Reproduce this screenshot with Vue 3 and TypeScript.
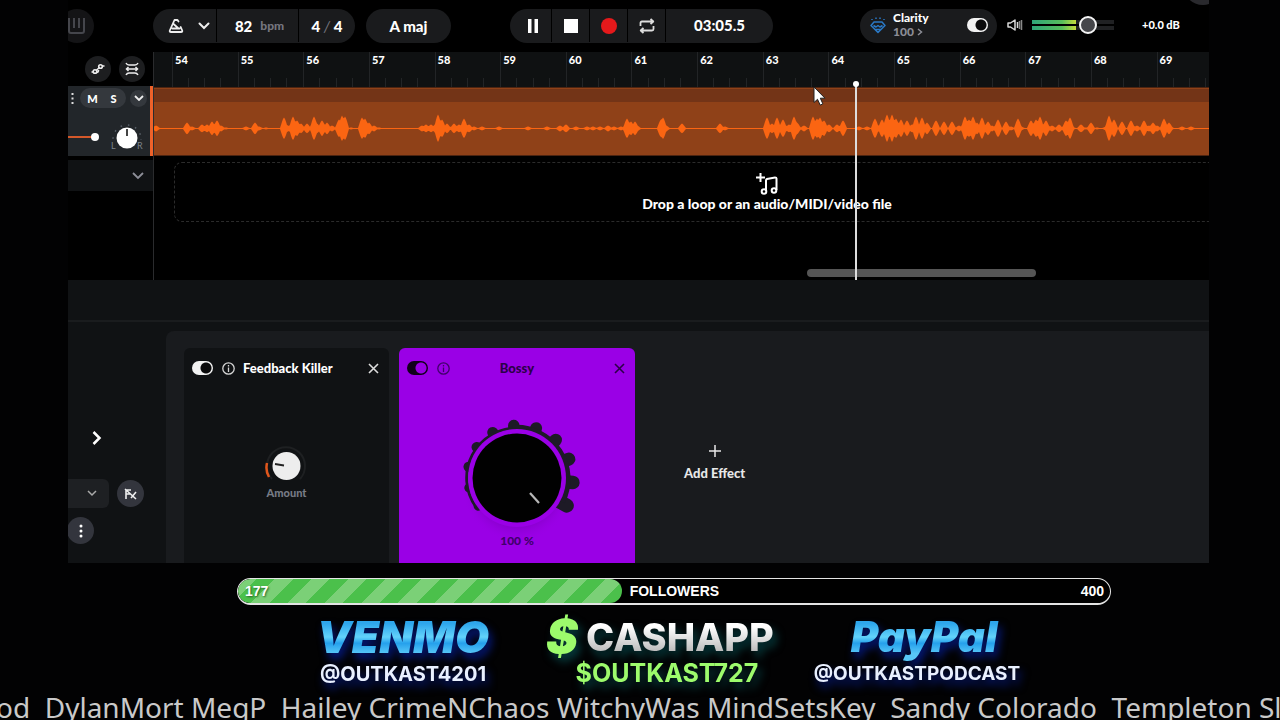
<script setup lang="ts">
import { ref } from 'vue'

const bars: number[] = Array.from({ length: 16 }, (_, i) => 54 + i)

const clarityOn = ref(true)
const feedbackOn = ref(true)
const bossyOn = ref(true)
const masterVolume = ref(73)
const trackVolume = ref(100)

const followers = 177
const followerGoal = 400
const followerWidth = `${Math.round((followers / followerGoal) * 100)}%`

// Waveform peaks as [position, amplitude] on a 1056-unit wide clip.
const peaks: [number, number][] = [
  [3, 3], [34, 6], [39, 2], [49, 4], [54, 4], [59, 7], [64, 8], [68, 3], [73, 1], [93, 2], [102, 6], [106, 2], [113, 1],
  [131, 11], [135, 3], [140, 12], [144, 8], [148, 5], [154, 5], [161, 12], [164, 5], [169, 8], [174, 6], [179, 3],
  [186, 9], [189, 13], [192, 12], [198, 1], [209, 11], [212, 10], [216, 6], [221, 3], [226, 1],
  [269, 3], [273, 4], [278, 4], [281, 3], [285, 14], [289, 9], [294, 5], [301, 5], [306, 4], [311, 10], [316, 4], [321, 2],
  [329, 2], [346, 2], [375, 2], [394, 2], [407, 3], [413, 4], [423, 2], [434, 2], [440, 2], [447, 2], [455, 3],
  [461, 2], [468, 2], [474, 10], [478, 7], [482, 7], [484, 3], [508, 9], [510, 11], [513, 3], [529, 5], [567, 5], [572, 2],
  [614, 11], [619, 5], [624, 11], [630, 9], [636, 4], [641, 12], [644, 6], [651, 3], [660, 12], [664, 10], [667, 11],
  [671, 8], [676, 4], [684, 4], [690, 8], [706, 2], [714, 2], [722, 10], [729, 9], [734, 14], [739, 14], [743, 10],
  [748, 9], [754, 8], [759, 4], [763, 12], [769, 11], [774, 6], [783, 8], [791, 7], [799, 7], [806, 3], [812, 12],
  [816, 9], [820, 12], [824, 6], [829, 11], [835, 7], [839, 3], [845, 9], [853, 7], [858, 2], [865, 10], [868, 2],
  [878, 8], [883, 9], [887, 12], [893, 8], [899, 3], [906, 4], [913, 8], [917, 11], [919, 2], [928, 4], [933, 1],
  [938, 6], [944, 1], [953, 2], [956, 13], [961, 9], [969, 7], [978, 8], [984, 3], [991, 8], [996, 3], [1000, 6],
  [1004, 3], [1011, 10], [1016, 6], [1019, 1], [1029, 2], [1038, 2],
]

function amplitude(x: number): number {
  let level = 0.6
  for (const [centre, height] of peaks) {
    const distance = Math.abs(x - centre)
    if (distance < 4) level = Math.max(level, height * (1 - (distance / 4) ** 1.4))
  }
  return level
}

const wavePath = (() => {
  const top: string[] = []
  const bottom: string[] = []
  for (let x = 0; x <= 1056; x++) {
    const a = amplitude(x)
    top.push(`${x} ${(26.5 - a).toFixed(1)}`)
    bottom.unshift(`${x} ${(26.5 + a * 0.96).toFixed(1)}`)
  }
  return `M${top.join('L')}L${bottom.join('L')}Z`
})()

// Teeth of the Bossy knob grow clockwise from lower left to lower right.
const teeth = Array.from({ length: 11 }, (_, i) => {
  const angle = ((144 + i * 24.5) * Math.PI) / 180
  const r = 48 + i * 0.9
  return { x: 70 + r * Math.cos(angle), y: 64 + r * Math.sin(angle), w: 9 + i * 0.5 }
})

const tickerText =
  'od  DylanMort MegP  Hailey CrimeNChaos WitchyWas MindSetsKey  Sandy Colorado  Templeton Sle'
</script>

<template>
  <div class="page">
    <main class="daw">
      <header class="toolbar">
        <button class="piano" aria-label="Instrument">
          <svg width="18" height="18" viewBox="0 0 18 18" fill="none" stroke="#45464c" stroke-width="2">
            <path d="M1 1v13q0 2 2 2h11q2 0 2-2V1M6 1v10M11 1v10" />
          </svg>
        </button>
        <div class="pill tempo">
          <div class="seg metro">
            <button aria-label="Metronome">
              <svg width="16" height="16" viewBox="0 0 16 16" fill="none" stroke="#eee" stroke-width="1.8" stroke-linecap="round" stroke-linejoin="round">
                <path d="M10.500 3.500 9.500 2h-3L1.800 12.500Q1.300 14 3 14h10q1.700 0 1.200-1.500L12.700 9M4.500 10.500h7M5 5.500l5 4.500" />
              </svg>
            </button>
            <button aria-label="Metronome options">
              <svg width="12" height="8" viewBox="0 0 12 8" fill="none" stroke="#eee" stroke-width="2" stroke-linecap="round"><path d="m1.500 1.500 4.500 4.500 4.500-4.500" /></svg>
            </button>
          </div>
          <button class="seg bpm"><b>82</b><span>bpm</span></button>
          <button class="seg meter">4 <i>/</i> 4</button>
        </div>
        <button class="pill key">A maj</button>
        <div class="pill transport">
          <button class="seg first" aria-label="Pause"><svg width="12" height="14" viewBox="0 0 12 14" fill="#fff"><path d="M1 0h3.500v14H1zM7.500 0H11v14H7.500z" /></svg></button>
          <button class="seg" aria-label="Stop"><svg width="14" height="14" viewBox="0 0 14 14" fill="#fff"><path d="M0 0h14v14H0z" /></svg></button>
          <button class="seg" aria-label="Record"><svg width="16" height="16" viewBox="0 0 16 16" fill="#e5191b"><circle cx="8" cy="8" r="8" /></svg></button>
          <button class="seg" aria-label="Loop">
            <svg width="16" height="16" viewBox="0 0 16 16" fill="none" stroke="#ddd" stroke-width="1.800" stroke-linejoin="round"><path d="M1.500 8V5q0-1.500 1.500-1.500h10M11.500 1l2.800 2.500-2.800 2.500M14.500 8v3q0 1.500-1.500 1.500H3M4.500 10l-2.800 2.500L4.500 15" /></svg>
          </button>
          <span class="seg time">03:05.5</span>
        </div>
        <div class="pill clarity">
          <svg width="16" height="18" viewBox="0 0 16 18" fill="none" stroke="#2a78c4" stroke-width="1.500" stroke-linejoin="round">
            <path d="M4 6h8l3 3.500-7 7L1 9.500zM3.500 9.500 6 11l2-1.500 2 1.500 2.500-1.500M5.500 13.500h5M2 4V3M6 3V1.500M10 3V1.500M14 4V3" />
          </svg>
          <label class="clarity-text" for="clarity"><b>Clarity</b><span>100 <svg width="6" height="8" viewBox="0 0 6 8" fill="none" stroke="#8c8d96" stroke-width="1.500"><path d="m1 1 3.500 3L1 7" /></svg></span></label>
          <input id="clarity" v-model="clarityOn" class="toggle" type="checkbox" />
        </div>
        <div class="volume">
          <svg width="16" height="14" viewBox="0 0 16 14" fill="none" stroke="#d8d8d8" stroke-width="1.500" stroke-linejoin="round"><path d="M1 5v4h2.500L8 12V2L3.500 5zM10.500 4v6" /><path d="M12.500 3v8M14.500 2v10" stroke="#888" /></svg>
          <div class="meters">
            <i></i><i></i>
            <input v-model="masterVolume" type="range" min="0" max="100" aria-label="Master volume" />
          </div>
          <output>+0.0 dB</output>
        </div>
        <span class="avatar"></span>
      </header>

      <section class="arranger">
        <div class="heads">
          <div class="tools">
            <button class="round" aria-label="Automation">
              <svg width="14" height="14" viewBox="0 0 14 14" fill="none" stroke="#eee" stroke-width="1.600"><circle cx="4" cy="9.500" r="1.800" /><circle cx="9.500" cy="4.500" r="1.800" /><path d="m5 8.500 3.500-3M.500 10h1.500M11 4h2.500M5.500 10.500q2 0 2-2.500" /></svg>
            </button>
            <button class="round" aria-label="Auto spacing">
              <svg width="14" height="14" viewBox="0 0 14 14" fill="none" stroke="#eee" stroke-width="1.500"><path d="M1 1q1 2 3 2h6q2 0 3-2M1 13q1-2 3-2h6q2 0 3 2M1 7h12M3.500 5l-2 2 2 2M10.500 5l2 2-2 2" /></svg>
            </button>
          </div>
          <div class="track">
            <div class="track-row">
              <button class="plain" aria-label="Track menu"><svg width="3" height="11" viewBox="0 0 3 11" fill="#ddd"><path d="M.500 0h2v2h-2zM.500 4.500h2v2h-2zM.500 9h2v2h-2z" /></svg></button>
              <div class="ms"><button>M</button><button>S</button></div>
              <button class="more" aria-label="Expand track"><svg width="10" height="6" viewBox="0 0 10 6" fill="none" stroke="#eee" stroke-width="1.800"><path d="m1 1 4 4 4-4" /></svg></button>
            </div>
            <div class="track-row">
              <input v-model="trackVolume" class="fader" type="range" min="0" max="100" aria-label="Track volume" />
              <svg class="pan" width="34" height="30" viewBox="0 0 34 30">
                <circle cx="17" cy="17" r="14" fill="none" stroke="#596069" stroke-width="1.500" stroke-dasharray="1.500 6" stroke-dashoffset="1" />
                <path d="M0 20h34v10H0z" fill="#22262a" />
                <circle cx="17" cy="16" r="10.500" fill="#fff" /><path d="M17 7v7" stroke="#444" stroke-width="2" />
                <text x="1" y="27">L</text><text x="27" y="27">R</text>
              </svg>
            </div>
          </div>
          <div class="master">
            <button class="plain" aria-label="Expand master"><svg width="12" height="8" viewBox="0 0 12 8" fill="none" stroke="#8d8e98" stroke-width="1.800"><path d="m1 1 5 5 5-5" /></svg></button>
          </div>
        </div>

        <div class="timeline">
          <div class="ruler">
            <div v-for="bar in bars" :key="bar" class="bar"><span>{{ bar }}</span><i></i><i></i><i></i><i></i></div>
          </div>
          <div class="clip">
            <div class="clip-title"></div>
            <svg class="wave" viewBox="0 0 1056 52" preserveAspectRatio="none" fill="#fb6512"><path :d="wavePath" /></svg>
          </div>
          <div class="drop">
            <svg width="22" height="22" viewBox="0 0 22 22" fill="none" stroke="#fff" stroke-width="2"><path d="M4.500 0v9M0 4.500h9M10 18V7.500q0-1 1-1.500l8-1.500q1.500 0 1.500 1V17" /><circle cx="8" cy="18.500" r="2.300" /><circle cx="18" cy="17.500" r="2.300" /></svg>
            <p>Drop a loop or an audio/MIDI/video file</p>
          </div>
          <div class="scroll"></div>
          <div class="playhead"></div>
          <svg class="cursor" width="14" height="20" viewBox="0 0 14 20" fill="#fff" stroke="#222" stroke-width="1"><path d="M1 1v15.500l3.500-3.200 2.700 5.800 2.700-1.200-2.600-5.700H12z" /></svg>
        </div>
      </section>

      <section class="effects">
        <div class="effects-bar"></div>
        <div class="effects-body">
          <aside>
            <button class="plain next" aria-label="Next"><svg width="10" height="16" viewBox="0 0 10 16" fill="none" stroke="#fff" stroke-width="2.500"><path d="m1.500 2 6 6-6 6" /></svg></button>
            <div class="preset-row">
              <button class="preset" aria-label="Presets"><svg width="10" height="7" viewBox="0 0 10 7" fill="none" stroke="#aaa" stroke-width="1.500"><path d="m1 1 4 4 4-4" /></svg></button>
              <button class="fx" aria-label="Bypass effects"><svg width="14" height="12" viewBox="0 0 14 12" fill="none" stroke="#eee" stroke-width="1.600"><path d="M2 11V2h5M2 6h4M7 10l5-6M1 1l11 10" /></svg></button>
            </div>
            <button class="fx dots" aria-label="More"><svg width="4" height="14" viewBox="0 0 4 14" fill="#fff"><circle cx="2" cy="2" r="1.500" /><circle cx="2" cy="7" r="1.500" /><circle cx="2" cy="12" r="1.500" /></svg></button>
          </aside>
          <div class="rack">
            <article class="card">
              <header>
                <input v-model="feedbackOn" class="toggle" type="checkbox" aria-label="Feedback Killer on" />
                <button class="plain" aria-label="About"><svg width="13" height="13" viewBox="0 0 13 13" fill="none" stroke="#d5d5d5" stroke-width="1.300"><circle cx="6.500" cy="6.500" r="5.700" /><path d="M6.500 5.500V10M6.500 3v1.500" /></svg></button>
                <h2>Feedback Killer</h2>
                <button class="plain" aria-label="Remove"><svg width="11" height="11" viewBox="0 0 11 11" stroke="#ddd" stroke-width="1.600"><path d="m1 1 9 9M10 1l-9 9" /></svg></button>
              </header>
              <svg class="amount" width="44" height="40" viewBox="0 0 44 40" fill="none">
                <path d="M7 33A19 19 0 1 1 35 33" stroke="#1e2022" stroke-width="2" />
                <path d="M4 31A19 19 0 0 1 2 17" stroke="#e0561c" stroke-width="2.500" />
                <circle cx="21.500" cy="20" r="14" fill="#ededed" /><path d="m10 18 9 1.500" stroke="#222" stroke-width="1.800" />
              </svg>
              <p>Amount</p>
            </article>
            <article class="card bossy">
              <header>
                <input v-model="bossyOn" class="toggle" type="checkbox" aria-label="Bossy on" />
                <button class="plain" aria-label="About"><svg width="13" height="13" viewBox="0 0 13 13" fill="none" stroke="#41006b" stroke-width="1.300"><circle cx="6.500" cy="6.500" r="5.700" /><path d="M6.500 5.500V10M6.500 3v1.500" /></svg></button>
                <h2>Bossy</h2>
                <button class="plain" aria-label="Remove"><svg width="11" height="11" viewBox="0 0 11 11" stroke="#2c0049" stroke-width="1.600"><path d="m1 1 9 9M10 1l-9 9" /></svg></button>
              </header>
              <svg class="knob" width="140" height="128" viewBox="0 0 140 128">
                <defs>
                  <radialGradient id="knob-shade"><stop offset=".6" stop-color="#7a00b8" /><stop offset="1" stop-color="#9a00e6" stop-opacity="0" /></radialGradient>
                </defs>
                <circle cx="70" cy="72" r="56" fill="url(#knob-shade)" />
                <g stroke="#1d1a26" stroke-linecap="round">
                  <line v-for="(t, i) in teeth" :key="i" x1="70" y1="64" :x2="t.x" :y2="t.y" :stroke-width="t.w" />
                </g>
                <path d="M29 93A50 50 0 0 1 70 14" fill="none" stroke="#1d1a26" stroke-width="3" />
                <path d="M66 14A51 51 0 0 1 115 88" fill="none" stroke="#1d1a26" stroke-width="6" />
                <circle cx="70" cy="64" r="49" fill="#9a00e6" /><circle cx="70" cy="64" r="44.500" fill="#010101" />
                <path d="m83 79 9 10" stroke="#b8b8b8" stroke-width="2.200" />
              </svg>
              <p>100 %</p>
            </article>
            <button class="add">
              <svg width="12" height="12" viewBox="0 0 12 12" stroke="#e8e8e8" stroke-width="1.500"><path d="M6 0v12M0 6h12" /></svg>
              Add Effect
            </button>
          </div>
        </div>
      </section>
    </main>

    <section class="goal">
      <div class="fill" :style="{ width: followerWidth }">{{ followers }}</div>
      <span class="goal-name">FOLLOWERS</span>
      <span class="goal-total">{{ followerGoal }}</span>
    </section>

    <section class="tips">
      <div class="tip blue"><h3><span>VENMO</span></h3><p>@OUTKAST4201</p></div>
      <div class="tip cash"><h3><b>$</b><span>CASHAPP</span></h3><p>$OUTKAST727</p></div>
      <div class="tip blue paypal"><h3><span>PayPal</span></h3><p>@OUTKASTPODCAST</p></div>
    </section>

    <div class="ticker">{{ tickerText }}</div>
  </div>
</template>

<style>
body {
  margin: 0;
  background: #020203;
}
</style>

<style scoped>
* {
  box-sizing: border-box;
}
.page {
  display: flex;
  flex-direction: column;
  height: 100vh;
  overflow: hidden;
  color: #fff;
  background: #020203;
  font-family: Lato, "Open Sans", sans-serif;
  font-size: 13px;
  font-weight: 900;
}
h2, h3, p {
  margin: 0;
}
svg {
  display: block;
  flex: none;
}
button {
  display: flex;
  align-items: center;
  justify-content: center;
  padding: 0;
  border: 0;
  background: none;
  color: inherit;
  font: inherit;
}
.daw {
  flex: none;
  margin: 0 71px 0 68px;
  overflow: hidden;
  background: #000;
}

/* toolbar */
.toolbar {
  position: relative;
  display: flex;
  align-items: center;
  height: 52px;
}
.piano {
  width: 34px;
  height: 34px;
  margin-left: -8px;
  border-radius: 50%;
  background: #141416;
}
.pill {
  display: flex;
  flex: none;
  height: 34px;
  border-radius: 17px;
  overflow: hidden;
  gap: 1px;
  padding-bottom: 1px;
  background: #1a1b1d;
  font-size: 15px;
}
.seg {
  box-shadow: 1px 0 #000;
}
.tempo {
  margin-left: 59px;
}
.metro {
  display: flex;
  gap: 14px;
  width: 63px;
  padding-left: 15px;
}
.bpm {
  width: 81px;
  gap: 8px;
  padding-left: 4px;
}
.bpm span {
  color: #75767f;
  font-size: 12px;
}
.meter {
  width: 56px;
  white-space: pre;
}
.meter i {
  color: #75767f;
  font-weight: 400;
}
.key {
  width: 85px;
  margin-left: 11px;
}
.transport {
  margin-left: 59px;
}
.transport .seg {
  width: 37px;
}
.transport .first {
  width: 41px;
  padding-left: 4px;
}
.transport .time {
  width: 107px;
  line-height: 33px;
  text-align: center;
}
.clarity {
  align-items: center;
  width: 137px;
  margin-left: auto;
  padding: 0 9px 2px 10px;
  gap: 7px;
  font-size: 12px;
  line-height: 14px;
}
.clarity-text {
  flex: 1;
}
.clarity-text b,
.clarity-text span {
  display: flex;
  align-items: center;
  gap: 3px;
}
.clarity-text span {
  color: #8c8d96;
}
.toggle {
  appearance: none;
  flex: none;
  width: 21px;
  height: 14px;
  margin: 0;
  border-radius: 7px;
  background: radial-gradient(circle at 14px 7px, #0b0b0c 5px, #f2f2f2 6px);
}
.volume {
  display: flex;
  align-items: center;
  width: 202px;
  padding-bottom: 2px;
  margin-left: 10px;
}
.meters {
  position: relative;
  display: flex;
  flex-direction: column;
  gap: 2px;
  width: 82px;
  margin: 0 28px 0 9px;
}
.meters i {
  height: 4px;
  background: linear-gradient(90deg, #2fa579, #57bd5c 30px, #c5dc3c 44px, #202123 44px);
}
.meters input {
  position: absolute;
  inset: -5px 0;
  width: 100%;
  height: 20px;
  margin: 0;
  appearance: none;
  background: none;
}
.meters input::-webkit-slider-thumb {
  appearance: none;
  width: 18px;
  height: 18px;
  border: 2px solid #f4f4f4;
  border-radius: 50%;
  background: #45464a;
}
.volume output {
  padding-bottom: 2px;
  font-size: 11px;
}
.avatar {
  position: absolute;
  top: -35px;
  right: -14px;
  width: 40px;
  height: 40px;
  border-radius: 50%;
  background: #29292d;
}

/* arranger */
.arranger {
  display: grid;
  grid-template-columns: 85px 1fr;
  min-height: 228px;
}
.tools {
  display: flex;
  justify-content: flex-end;
  align-items: center;
  gap: 8px;
  height: 34px;
  padding-right: 8px;
}
.round {
  width: 26px;
  height: 26px;
  border-radius: 50%;
  background: #1d1e20;
}
.track {
  height: 70px;
  border-right: 3px solid #ee622a;
  background: #22262a;
}
.track-row {
  display: flex;
  align-items: center;
}
.track-row:first-child {
  gap: 4px;
  padding: 2px 0 0 3px;
}
.ms {
  display: flex;
  width: 46px;
  height: 20px;
  padding: 0 2px;
  margin-left: 2px;
  border-radius: 10px;
  background: #34383d;
  font-size: 11px;
}
.ms button {
  flex: 1;
}
.more {
  width: 17px;
  height: 17px;
  border-radius: 50%;
  background: #34383d;
}
.fader {
  appearance: none;
  width: 31px;
  height: 12px;
  margin: 13px 0 0;
  background: linear-gradient(#d4582a, #d4582a) 0 50% / 26px 2px no-repeat;
}
.fader::-webkit-slider-thumb {
  appearance: none;
  width: 8px;
  height: 8px;
  border-radius: 50%;
  background: #fff;
}
.pan {
  margin: 14px 0 0 11px;
}
.pan text {
  fill: #7d838b;
  font-size: 9px;
  font-weight: 400;
}
.master {
  display: flex;
  justify-content: flex-end;
  height: 31px;
  margin-top: 4px;
  padding-right: 9px;
  background: #101214;
}
.timeline {
  position: relative;
  min-width: 0;
  overflow: hidden;
  border-left: 1px solid #2a2b2d;
}
.ruler {
  display: flex;
  height: 35px;
  padding-left: 18px;
  background: #0f1112;
}
.bar {
  position: relative;
  display: grid;
  grid-template-columns: repeat(4, 1fr);
  align-items: end;
  flex: 0 0 6.33%;
  border-left: 1px solid #222426;
}
.bar i {
  height: 9px;
  border-right: 1px solid #222426;
}
.bar i:last-child {
  border: 0;
}
.bar span {
  position: absolute;
  top: 1px;
  left: 2px;
  font-size: 11px;
  line-height: 14px;
}
.clip {
  height: 69px;
  padding: 1px 0;
  margin-left: -1px;
  border-bottom: 1px solid #4c2411;
  border-top: 1px solid #4c2411;
  background: #8f4118;
}
.clip-title {
  height: 13px;
  background: #733417;
}
.wave {
  width: 100%;
  height: 52px;
}
.drop {
  display: flex;
  flex-direction: column;
  align-items: center;
  height: 60px;
  margin: 6px -151px 0 20px;
  padding-top: 10px;
  border: 1px dashed #2b2b2b;
  border-radius: 8px;
  font-size: 14px;
  line-height: 18px;
}
.scroll {
  position: absolute;
  bottom: 3px;
  left: 61.9%;
  width: 21.7%;
  height: 8px;
  border-radius: 4px;
  background: #555;
}
.playhead {
  position: absolute;
  top: 32px;
  bottom: 0;
  left: 66.4%;
  width: 2px;
  background: #ddd;
}
.playhead::before {
  content: "";
  position: absolute;
  top: -3px;
  left: -2px;
  width: 6px;
  height: 6px;
  border-radius: 50%;
  background: #fff;
}
.cursor {
  position: absolute;
  top: 34px;
  left: 62.5%;
}

/* effects */
.effects {
  background: #101214;
}
.effects-bar {
  height: 42px;
  border-bottom: 2px solid #1a1c1e;
}
.effects-body {
  display: grid;
  grid-template-columns: 98px 1fr;
  height: 241px;
}
aside {
  padding-top: 108px;
}
.next {
  margin-left: 24px;
}
.preset-row {
  display: flex;
  align-items: center;
  gap: 8px;
  margin-top: 33px;
}
.preset {
  width: 41px;
  height: 29px;
  padding-left: 6px;
  border-radius: 0 6px 6px 0;
  background: #1e2023;
}
.fx {
  width: 27px;
  height: 27px;
  border-radius: 50%;
  background: #33353d;
}
.dots {
  margin: 9px 0 0 -1px;
}
.rack {
  display: flex;
  margin-top: 9px;
  padding: 17px 0 0 18px;
  border-radius: 8px 0 0 0;
  background: #191b1e;
}
.card {
  display: flex;
  flex-direction: column;
  align-items: center;
  width: 205px;
  border-radius: 6px 6px 0 0;
  background: #101214;
}
.card header {
  display: flex;
  align-items: center;
  gap: 9px;
  width: 100%;
  height: 40px;
  padding: 0 10px 0 8px;
}
.card h2 {
  flex: 1;
  margin-left: -1px;
  font-size: 13px;
  font-weight: 900;
}
.amount {
  margin-top: 58px;
}
.card p {
  color: #777b85;
  font-size: 11px;
  line-height: 14px;
}
.bossy {
  width: 236px;
  margin-left: 10px;
  background: #9a00e6;
}
.bossy h2 {
  margin-right: 29px;
  color: #2c0049;
  text-align: center;
}
.bossy .toggle {
  background: radial-gradient(circle at 14px 7px, #9a00e6 5px, #10001a 6px);
}
.knob {
  margin: 26px 0 -8px;
}
.bossy p {
  color: #41006b;
  font-size: 12px;
}
.add {
  flex-direction: column;
  gap: 8px;
  align-self: flex-start;
  margin: 97px 0 0 49px;
  color: #e8e8e8;
}

/* stream overlay */
.goal {
  display: flex;
  flex: none;
  align-items: center;
  height: 27px;
  margin: 15px 169px 0 237px;
  border: 1px solid #e4e4e4;
  border-bottom-width: 2px;
  border-radius: 14px;
  background: #000;
  overflow: hidden;
  font: bold 14px/24px "Liberation Sans", sans-serif;
}
.fill {
  flex: none;
  padding-left: 7px;
  border-radius: 12px;
  background: repeating-linear-gradient(135deg, #7bd077 0 13px, #4bc04b 13px 26px);
  text-shadow: 1px 1px 2px #2a602a;
}
.goal-name {
  flex: 1;
  margin-left: 8px;
}
.goal-total {
  margin-right: 6px;
}
.tips {
  display: grid;
  grid-template-columns: repeat(3, 257px);
  justify-content: center;
  flex: none;
  height: 88px;
  padding-left: 40px;
  font-family: Inter, sans-serif;
}
.tip {
  text-align: center;
  white-space: nowrap;
  filter: drop-shadow(3px 6px 4px #04187a);
}
.tip h3 {
  display: flex;
  justify-content: center;
  align-items: center;
  height: 56px;
  padding-top: 7px;
  font-size: 44px;
  font-weight: 900;
  line-height: 52px;
}
.tip p {
  font-size: 20px;
  font-weight: 700;
  line-height: 26px;
  color: #e9f0ff;
}
.blue h3 span {
  padding: 0 4px;
  background: linear-gradient(#2ea6ec 24%, #62d2fb 50%, #25a0ec 62%, #58c8f8 82%);
  background-clip: text;
  -webkit-text-fill-color: transparent;
  font-style: italic;
}
.cash {
  filter: drop-shadow(4px 6px 4px #053a3c);
}
.cash h3 {
  gap: 8px;
  font-size: 38px;
}
.cash b {
  color: #9dfb6c;
  font-size: 48px;
  font-style: italic;
}
.cash h3 span {
  background: linear-gradient(#fff 30%, #b9b9b9 80%);
  background-clip: text;
  -webkit-text-fill-color: transparent;
  font-weight: 800;
}
.cash p {
  padding-left: 14px;
  color: #9dfb6c;
  font-size: 25px;
  line-height: 24px;
}
.paypal h3 {
  padding-left: 14px;
  font-size: 42px;
}
.paypal p {
  font-size: 19px;
}
.ticker {
  flex: none;
  margin-left: -4px;
  overflow: hidden;
  color: #c9c9c9;
  font: 400 28px/28px "Noto Sans", "Open Sans", sans-serif;
  white-space: pre;
}
</style>
